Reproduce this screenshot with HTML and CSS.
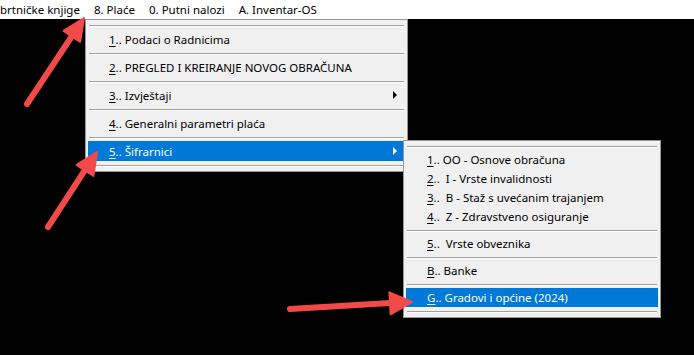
FILE: index.html
```html
<!DOCTYPE html>
<html lang="en">
<head>
    <meta charset="UTF-8">
    <title>Plaće</title>
    <link rel="stylesheet" href="styles.css">
</head>
<body>
    <nav class="menubar">
        <span class="bar-item first">brtničke knjige</span>
        <span class="bar-item">8. Plaće</span>
        <span class="bar-item">0. Putni nalozi</span>
        <span class="bar-item">A. Inventar-OS</span>
    </nav>

    <div class="menu main-menu">
        <div class="group"><div class="row"><span class="label"><u>1</u>.. Podaci o Radnicima</span></div></div>
        <div class="group"><div class="row"><span class="label"><u>2</u>.. PREGLED I KREIRANJE NOVOG OBRAČUNA</span></div></div>
        <div class="group"><div class="row"><span class="label"><u>3</u>.. Izvještaji</span><span class="caret"></span></div></div>
        <div class="group"><div class="row"><span class="label"><u>4</u>.. Generalni parametri plaća</span></div></div>
        <div class="group"><div class="row active"><span class="label"><u>5</u>.. Šifrarnici</span><span class="caret"></span></div></div>
        <div class="sep"></div>
    </div>

    <div class="menu sub-menu">
        <div class="group">
            <div class="row"><span class="label"><u>1</u>.. OO - Osnove obračuna</span></div>
            <div class="row"><span class="label"><u>2</u>.. &nbsp;I - Vrste invalidnosti</span></div>
            <div class="row"><span class="label"><u>3</u>.. &nbsp;B - Staž s uvećanim trajanjem</span></div>
            <div class="row"><span class="label"><u>4</u>.. &nbsp;Z - Zdravstveno osiguranje</span></div>
        </div>
        <div class="group"><div class="row"><span class="label"><u>5</u>.. &nbsp;Vrste obveznika</span></div></div>
        <div class="group"><div class="row"><span class="label"><u>B</u>.. Banke</span></div></div>
        <div class="group"><div class="row active"><span class="label"><u>G</u>.. Gradovi i općine (2024)</span></div></div>
        <div class="sep"></div>
    </div>

    <!-- annotation arrows drawn over the screenshot -->
    <svg class="arrows" width="694" height="355" viewBox="0 0 694 355">
        <g fill="#f24949" stroke="#f24949" stroke-linecap="round" stroke-linejoin="round">
            <line x1="27" y1="104" x2="72" y2="36" stroke-width="6"/>
            <polygon points="84,18 80.1,41.8 63.5,30.8" stroke-width="2"/>
            <line x1="48" y1="227" x2="85" y2="170" stroke-width="6"/>
            <polygon points="97,152 93.4,175.9 76.6,164.9" stroke-width="2"/>
            <line x1="290" y1="309" x2="390" y2="303" stroke-width="6"/>
            <polygon points="412,302 390.6,314.3 389.4,292.3" stroke-width="2"/>
        </g>
    </svg>
</body>
</html>
```

FILE: styles.css
```css
body {
    margin: 0;
    width: 694px;
    height: 355px;
    background-color: #000000;
    font-family: 'Noto Sans', 'Open Sans', sans-serif;
    font-size: 11.5px;
    color: #000000;
    position: relative;
    overflow: hidden;
}

.menubar {
    display: flex;
    height: 19px;
    align-items: center;
    background-color: #ffffff;
}

.bar-item {
    padding: 0 7px;
    white-space: nowrap;
}

.bar-item.first {
    padding-left: 0;
    padding-right: 7px;
}

.menu {
    position: absolute;
    background-color: #f0f0f0;
    border: 1px solid #979797;
    padding: 5px 2px 4px 2px;
    box-sizing: border-box;
}

.main-menu {
    left: 85px;
    top: 19px;
    width: 323px;
}

.sub-menu {
    left: 403px;
    top: 140px;
    width: 258px;
}

.group {
    border-top: 1px solid #a0a0a0;
    box-shadow: inset 0 1px 0 #ffffff;
    padding: 3px 0 4px 0;
    margin: 0 1px;
}

.sep {
    border-top: 1px solid #a0a0a0;
    border-bottom: 1px solid #ffffff;
    margin: 0 1px;
}

.row {
    display: flex;
    align-items: center;
    height: 20px;
    padding-left: 21px;
    padding-right: 8px;
    white-space: nowrap;
    margin: 0 -1px;
}

.sub-menu .row {
    height: 19px;
}

.row .label {
    flex: 1;
}

.row.active {
    background-color: #0078d7;
    color: #ffffff;
}

.caret {
    width: 0;
    height: 0;
    border-top: 4px solid transparent;
    border-bottom: 4px solid transparent;
    border-left: 4px solid #000000;
}

.row.active .caret {
    border-left-color: #ffffff;
}

u {
    text-decoration-thickness: 1px;
    text-underline-offset: 2px;
}

.arrows {
    position: absolute;
    left: 0;
    top: 0;
    pointer-events: none;
}
```
